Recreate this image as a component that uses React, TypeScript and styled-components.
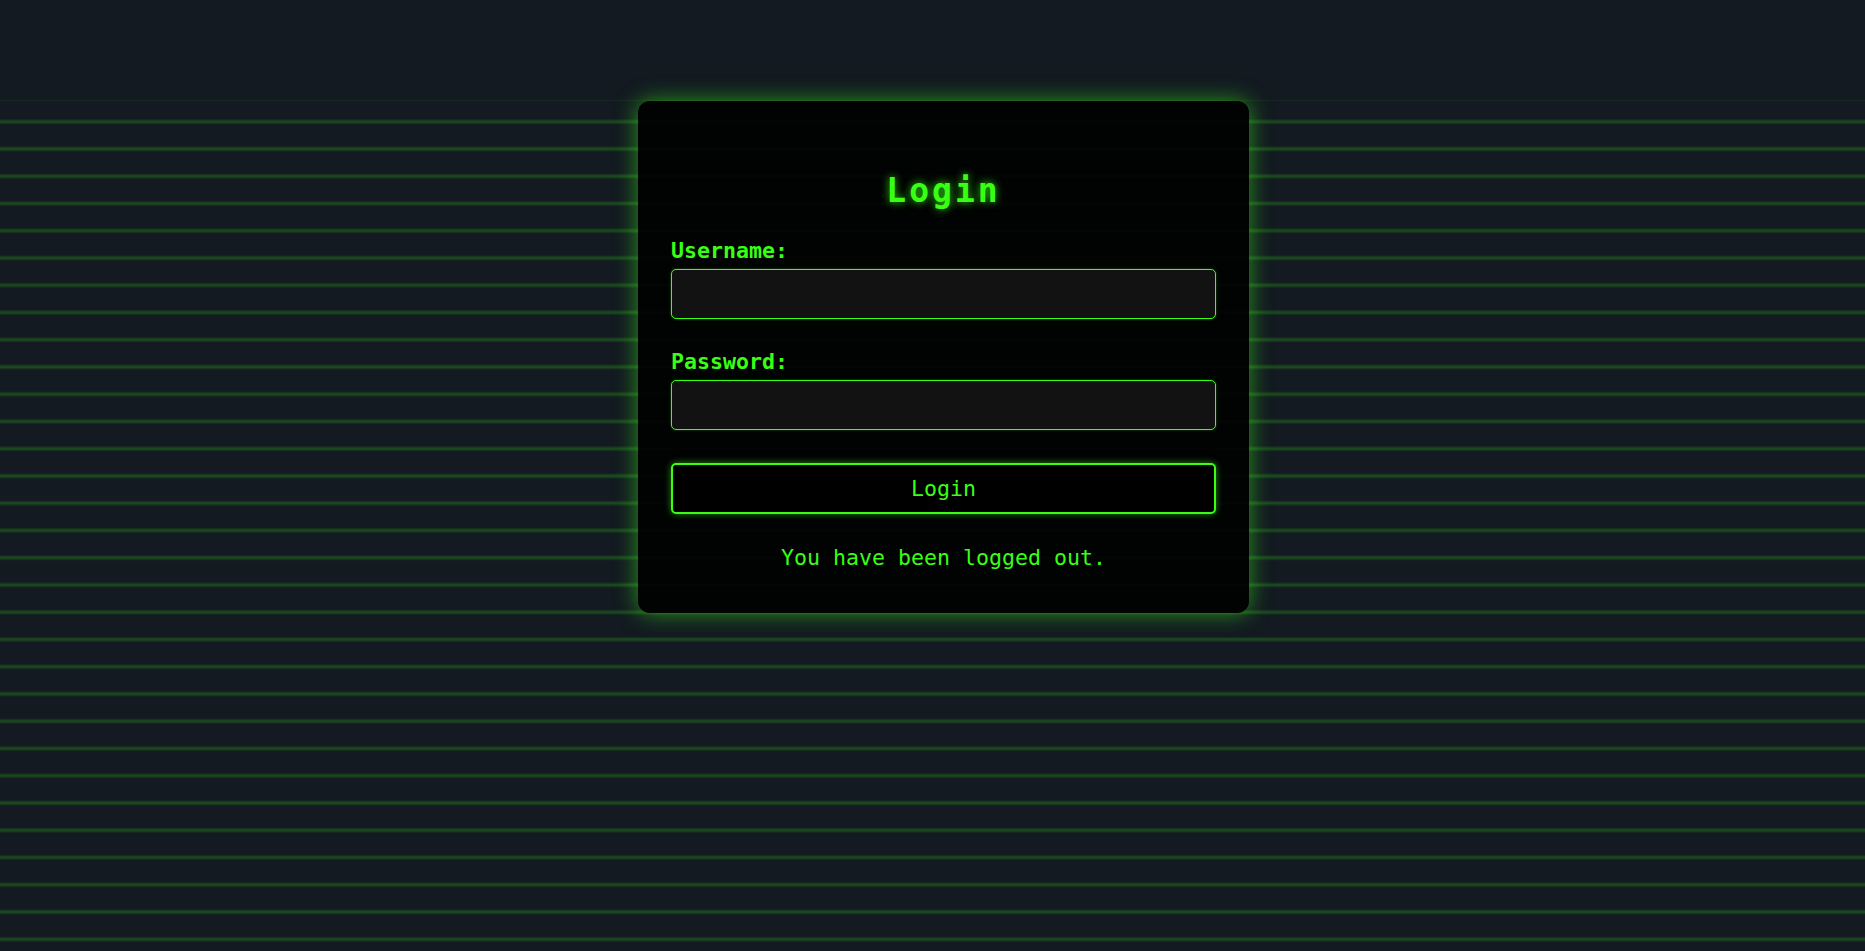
import React from "react";
import styled, { createGlobalStyle } from "styled-components";

const GREEN = "#39ff14";

const GlobalStyle = createGlobalStyle`
  html, body {
    margin: 0;
    padding: 0;
    background: #131a21;
  }
  body {
    font-family: "DejaVu Sans Mono", "Liberation Mono", monospace;
    color: ${GREEN};
  }
  * { box-sizing: border-box; }
`;

const Page = styled.div`
  min-height: 100vh;
  padding-top: 100px;
  background: #131a21;
`;

const Stage = styled.div`
  min-height: calc(100vh - 100px);
  display: flex;
  justify-content: center;
  align-items: flex-start;
  padding-left: 22px;
  border-top: 1px solid rgba(57, 255, 20, 0.07);
  background-image: repeating-linear-gradient(
    to bottom,
    transparent 0px,
    transparent 17.7px,
    rgba(57, 255, 20, 0.08) 18.7px,
    rgba(57, 255, 20, 0.2) 20.2px,
    rgba(57, 255, 20, 0.2) 21.2px,
    rgba(57, 255, 20, 0.08) 22.7px,
    transparent 23.7px,
    transparent 27.25px
  );
`;

const Card = styled.div`
  width: 611px;
  padding: 70px 33px 42px;
  background: rgba(0, 0, 0, 0.92);
  border-radius: 12px;
  box-shadow: 0 0 22px rgba(57, 255, 20, 0.55);
  display: flex;
  flex-direction: column;
`;

const Title = styled.h1`
  margin: 0 0 27px;
  font-size: 33px;
  line-height: 40px;
  font-weight: bold;
  letter-spacing: 3px;
  text-align: center;
  color: ${GREEN};
  text-shadow: 0 0 8px rgba(57, 255, 20, 0.85);
`;

const Field = styled.div<{ $gap: number }>`
  display: flex;
  flex-direction: column;
  margin-bottom: ${(p) => p.$gap}px;
`;

const Label = styled.label`
  font-size: 21.6px;
  line-height: 26px;
  font-weight: bold;
  color: ${GREEN};
  margin-bottom: 5px;
`;

const Input = styled.input`
  height: 50px;
  width: 100%;
  background: #121212;
  border: 1px solid ${GREEN};
  border-radius: 5px;
  color: ${GREEN};
  font-family: inherit;
  font-size: 20px;
  padding: 0 10px;
  outline: none;
  box-shadow: 0 0 3px rgba(57, 255, 20, 0.35);
`;

const Button = styled.button`
  height: 51px;
  width: 100%;
  background: #000;
  border: 2px solid ${GREEN};
  border-radius: 5px;
  color: ${GREEN};
  font-family: inherit;
  font-size: 21.6px;
  cursor: pointer;
  box-shadow: 0 0 7px rgba(57, 255, 20, 0.55);
`;

const Message = styled.p`
  margin: 31px 0 0;
  font-size: 21.6px;
  line-height: 26px;
  text-align: center;
  color: ${GREEN};
`;

export default function App() {
  return (
    <>
      <GlobalStyle />
      <Page>
        <Stage>
          <Card>
            <Title>Login</Title>
            <Field $gap={30}>
              <Label htmlFor="username">Username:</Label>
              <Input id="username" type="text" />
            </Field>
            <Field $gap={33}>
              <Label htmlFor="password">Password:</Label>
              <Input id="password" type="password" />
            </Field>
            <Button>Login</Button>
            <Message>You have been logged out.</Message>
          </Card>
        </Stage>
      </Page>
    </>
  );
}
